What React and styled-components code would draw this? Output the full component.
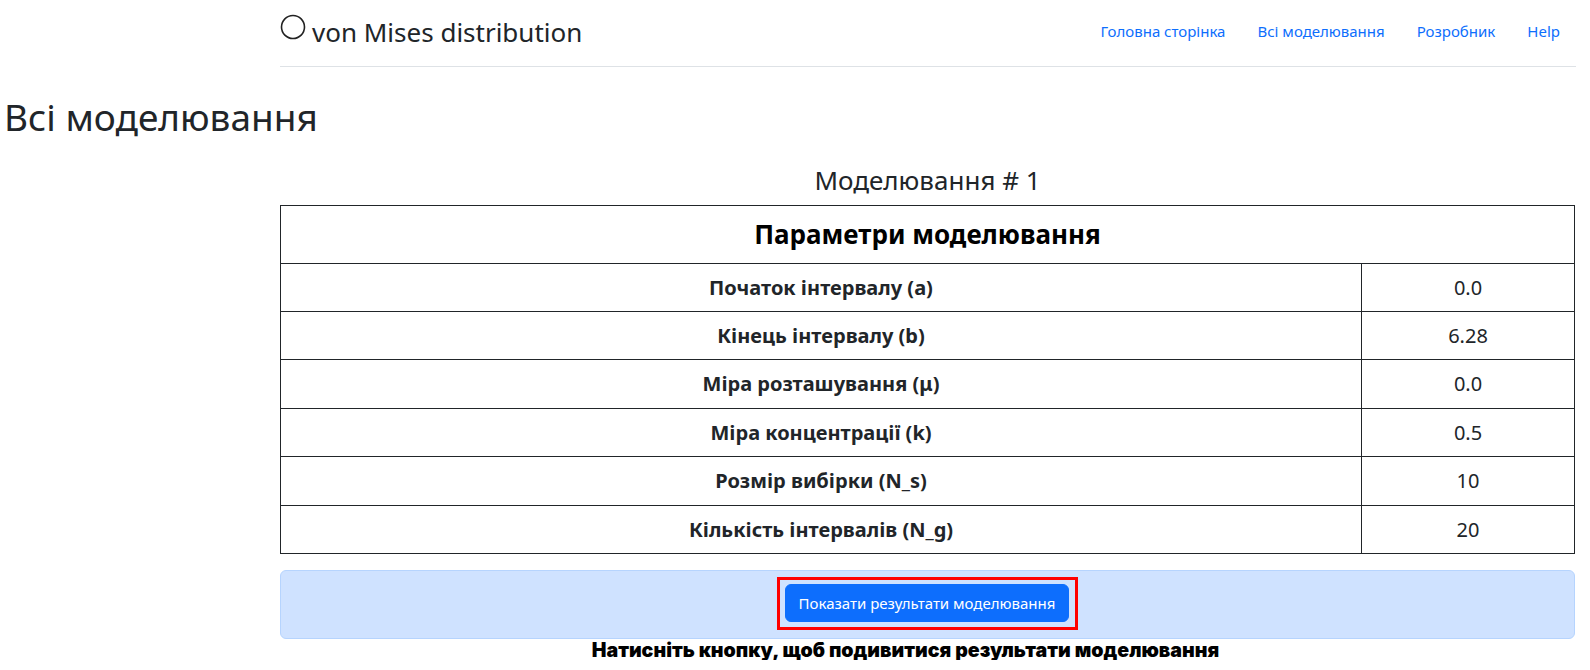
import React from "react";
import styled, { createGlobalStyle } from "styled-components";

const GlobalStyle = createGlobalStyle`
  body {
    margin: 0;
    background: #fff;
    color: #212529;
    font-family: "Noto Sans", "Open Sans", sans-serif;
  }
`;

const Page = styled.div`
  width: 1590px;
`;

const Header = styled.header`
  margin-left: 280px;
  margin-right: 14px;
  height: 66px;
  display: flex;
  align-items: flex-start;
  justify-content: space-between;
  border-bottom: 1px solid #dee2e6;
`;

const Brand = styled.a`
  display: flex;
  align-items: flex-start;
  gap: 6px;
  padding-top: 14px;
  font-size: 26px;
  color: #212529;
  text-decoration: none;
  line-height: 1;
`;

const BrandText = styled.span`
  margin-top: 5px;
`;

const Nav = styled.nav`
  display: flex;
  padding-top: 19px;
`;

const NavLink = styled.a`
  padding: 0 16px;
  font-size: 15px;
  line-height: 24px;
  color: #0d6efd;
  text-decoration: none;
`;

const Title = styled.h1`
  margin: 28px 0 0 4px;
  font-size: 37px;
  font-weight: 400;
  line-height: 1.2;
`;

const Section = styled.section`
  margin: 26px 15px 0 280px;
`;

const Caption = styled.h3`
  margin: 0 0 8px;
  text-align: center;
  font-size: 26px;
  font-weight: 400;
  line-height: 1.2;
`;

const Table = styled.table`
  width: 100%;
  border-collapse: collapse;
  border: 1px solid #212529;
`;

const HeadCell = styled.th`
  border: 1px solid #212529;
  padding: 13px;
  font-size: 26px;
  line-height: 31px;
  color: #000;
  text-align: center;
`;

const Cell = styled.td`
  border: 1px solid #212529;
  padding: 10px;
  font-size: 20px;
  font-weight: ${(p) => (p.$label ? 700 : 400)};
  line-height: 27.45px;
  text-align: center;
  width: ${(p) => (p.$label ? "auto" : "192px")};
`;

const Alert = styled.div`
  margin-top: 16px;
  display: flex;
  justify-content: center;
  padding: 6px 0 8px;
  background: #cfe2ff;
  border: 1px solid #b6d4fe;
  border-radius: 6px;
`;

const Highlight = styled.div`
  border: 3px solid #f00;
  padding: 4px 6px 5px 5px;
`;

const Button = styled.button`
  background: #0d6efd;
  color: #fff;
  border: 1px solid #0d6efd;
  border-radius: 6px;
  height: 38px;
  padding: 0 13px;
  font-family: inherit;
  font-size: 15px;
`;

const Hint = styled.p`
  margin: 0;
  padding: 1px 44px 0 0;
  text-align: center;
  font-family: Inter, "Noto Sans", sans-serif;
  font-weight: 900;
  font-size: 19.6px;
  line-height: 20px;
  color: #000;
`;

const Circle = () => (
  <svg width="26" height="26" viewBox="0 0 26 26">
    <circle cx="13" cy="13" r="11.5" fill="none" stroke="#222" strokeWidth="1.6" />
  </svg>
);

const params = [
  ["Початок інтервалу (a)", "0.0"],
  ["Кінець інтервалу (b)", "6.28"],
  ["Міра розташування (μ)", "0.0"],
  ["Міра концентрації (k)", "0.5"],
  ["Розмір вибірки (N_s)", "10"],
  ["Кількість інтервалів (N_g)", "20"],
];

export default function App() {
  return (
    <Page>
      <GlobalStyle />
      <Header>
        <Brand href="#">
          <Circle />
          <BrandText>von Mises distribution</BrandText>
        </Brand>
        <Nav>
          <NavLink href="#">Головна сторінка</NavLink>
          <NavLink href="#">Всі моделювання</NavLink>
          <NavLink href="#">Розробник</NavLink>
          <NavLink href="#">Help</NavLink>
        </Nav>
      </Header>
      <Title>Всі моделювання</Title>
      <Section>
        <Caption>Моделювання # 1</Caption>
        <Table>
          <thead>
            <tr>
              <HeadCell colSpan={2}>Параметри моделювання</HeadCell>
            </tr>
          </thead>
          <tbody>
            {params.map(([label, value]) => (
              <tr key={label}>
                <Cell $label>{label}</Cell>
                <Cell>{value}</Cell>
              </tr>
            ))}
          </tbody>
        </Table>
        <Alert>
          <Highlight>
            <Button>Показати результати моделювання</Button>
          </Highlight>
        </Alert>
        <Hint>Натисніть кнопку, щоб подивитися результати моделювання</Hint>
      </Section>
    </Page>
  );
}
